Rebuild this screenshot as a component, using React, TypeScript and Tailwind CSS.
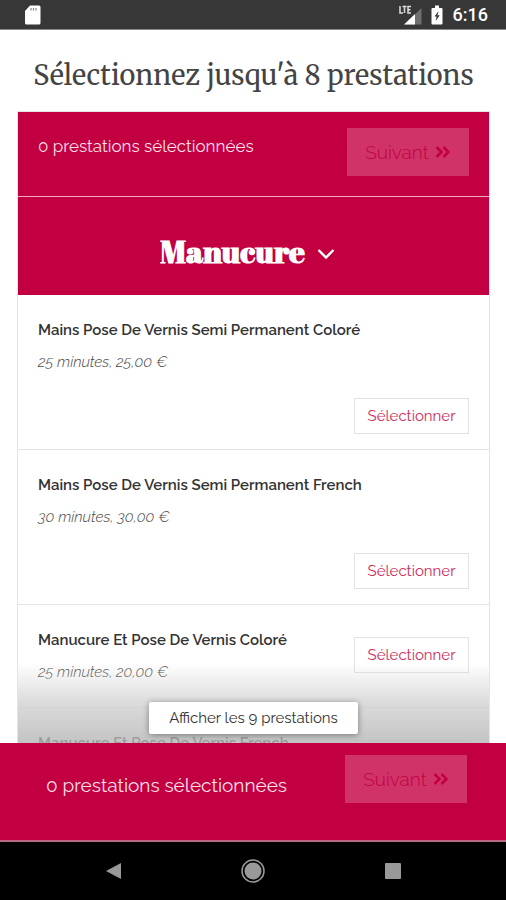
import React from "react";

type Service = { name: string; details: string };

const services: Service[] = [
  { name: "Mains Pose De Vernis Semi Permanent Coloré", details: "25 minutes, 25,00 €" },
  { name: "Mains Pose De Vernis Semi Permanent French", details: "30 minutes, 30,00 €" },
  { name: "Manucure Et Pose De Vernis Coloré", details: "25 minutes, 20,00 €" },
  { name: "Manucure Et Pose De Vernis French", details: "25 minutes, 20,00 €" },
];

function StatusBar() {
  return (
    <div className="flex h-[30px] shrink-0 items-center justify-between border-b border-[#8a8a8a] bg-[#373737] pr-[18px] pl-6">
      <svg className="mt-px h-5 w-[17px]" viewBox="0 0 17 20" aria-hidden="true">
        <path d="M6 .5h9A1.500 1.500 0 0 1 16.500 2v16a1.500 1.500 0 0 1-1.500 1.500H2.500A1.500 1.500 0 0 1 1 18V6z" fill="#fff" />
        <path d="M7 3v2.500M9.500 3v2.500M12 3v2.500" stroke="#888" strokeWidth="1.200" />
      </svg>
      <div className="flex items-center">
        <svg className="h-5 w-6" viewBox="0 0 24 20" aria-hidden="true">
          <path d="M22.500 3v16.500H6z" fill="#6f6f6f" />
          <path d="M16 9v10.500H5z" fill="#fff" />
          <path d="M1 1v7h3M3.500 1.500h4M5.500 1.500V8M12 1.500H9V8h3M9 4.700h2.500" fill="none" stroke="#ddd" strokeWidth="1.500" />
        </svg>
        <svg className="ml-2 h-5 w-3" viewBox="0 0 12 20" aria-hidden="true">
          <path d="M4 .5h4V3h2.500a1 1 0 0 1 1 1v14.500a1 1 0 0 1-1 1h-9a1 1 0 0 1-1-1V4a1 1 0 0 1 1-1H4z" fill="#fff" />
          <path d="M7.500 6 3.500 11.500h2L4.800 16l3.900-5.800H6.500z" fill="#373737" />
        </svg>
        <span className="ml-2.5 font-[Roboto,sans-serif] text-lg font-medium text-white">6:16</span>
      </div>
    </div>
  );
}

function NextButton() {
  return (
    <button
      type="button"
      disabled
      className="flex h-12 w-[122px] shrink-0 items-center justify-center gap-1.5 bg-[#d03368] text-[19px] font-light text-[#c20041]"
    >
      Suivant
      <svg className="h-3 w-4" viewBox="0 0 16 12" fill="none" stroke="currentColor" strokeWidth="2.500" aria-hidden="true">
        <path d="m1.500 1 5 5-5 5M8.500 1l5 5-5 5" />
      </svg>
    </button>
  );
}

function ServiceRow({ name, details }: Service) {
  return (
    <li className="flex flex-wrap items-start justify-between border-b border-[#e4e4e4] px-5 pt-4 pb-[15px]">
      <div className="pt-[3px] pb-1">
        <h3 className="text-[15px] leading-8 font-semibold text-[#333]">{name}</h3>
        <p className="text-[15px] leading-8 font-light text-[#444] italic">{details}</p>
      </div>
      <button
        type="button"
        className="mt-4 ml-auto h-9 w-[115px] border border-[#e2e2e2] bg-white text-[15px] text-[#d02a5e]"
      >
        Sélectionner
      </button>
    </li>
  );
}

export default function App() {
  return (
    <div className="flex h-screen flex-col bg-white font-[Raleway,Lato,sans-serif]">
      <StatusBar />
      <main className="flex min-h-0 flex-1 flex-col pr-4 pl-[17px]">
        <h1 className="shrink-0 pt-[25px] pb-4 text-center font-[Merriweather,'Liberation_Serif',serif] text-[27px] leading-10 text-[#444]">
          Sélectionnez jusqu'à 8 prestations
        </h1>
        <section className="relative min-h-0 flex-1 overflow-hidden border border-b-0 border-[#e4e4e4]">
          <div className="flex h-[85px] items-start justify-between border-b border-[#f0a8bf] bg-[#c20041] px-5 pt-4">
            <p className="pt-1.5 text-[17px] leading-6 text-[#fbdfe7]">0 prestations sélectionnées</p>
            <NextButton />
          </div>
          <h2 className="bg-[#c20041]">
            <button
              type="button"
              className="flex h-[98px] w-full items-center justify-center gap-3 pt-2.5 pr-3 font-[Abril_Fatface,'Liberation_Serif',serif] text-[31px] font-bold text-white"
            >
              Manucure
              <svg className="mt-1.5 h-3 w-[18px]" viewBox="0 0 18 12" fill="none" stroke="currentColor" strokeWidth="2.400" aria-hidden="true">
                <path d="m1.500 2 7.500 7.500L16.500 2" />
              </svg>
            </button>
          </h2>
          <ul>
            {services.map((service) => (
              <ServiceRow key={service.name} {...service} />
            ))}
          </ul>
          <div className="absolute inset-x-0 bottom-0 flex h-20 items-end justify-center bg-linear-to-b from-white/0 via-[#d2d2d2]/80 to-[#b5b5b5]/80 pb-[9px]">
            <button
              type="button"
              className="h-8 w-[209px] rounded-xs bg-white text-[15px] text-[#333] shadow-[0_1px_6px_rgba(0,0,0,0.4)]"
            >
              Afficher les 9 prestations
            </button>
          </div>
        </section>
      </main>
      <footer className="flex h-[99px] shrink-0 items-start justify-between border-b-2 border-[#b96a82] bg-[#c20041] pt-3 pr-[39px] pl-[46px]">
        <p className="pt-[18px] text-[19px] leading-6 text-[#fbdfe7]">0 prestations sélectionnées</p>
        <NextButton />
      </footer>
      <nav className="flex h-[58px] shrink-0 items-center justify-between bg-black px-[103px]" aria-label="Système">
        <button type="button" aria-label="Retour" className="flex w-5 justify-center">
          <svg className="h-4 w-4" viewBox="0 0 16 16" aria-hidden="true">
            <path d="M16 0v16L1 8z" fill="#999" />
          </svg>
        </button>
        <button type="button" aria-label="Accueil" className="flex w-6 justify-center">
          <svg className="h-6 w-6" viewBox="0 0 24 24" aria-hidden="true">
            <circle cx="12" cy="12" r="11" fill="none" stroke="#999" strokeWidth="1.500" />
            <circle cx="12" cy="12" r="8.500" fill="#999" />
          </svg>
        </button>
        <button type="button" aria-label="Applications récentes" className="flex w-5 justify-center">
          <svg className="h-4 w-4" viewBox="0 0 16 16" aria-hidden="true">
            <rect width="16" height="16" rx="1" fill="#999" />
          </svg>
        </button>
      </nav>
    </div>
  );
}
